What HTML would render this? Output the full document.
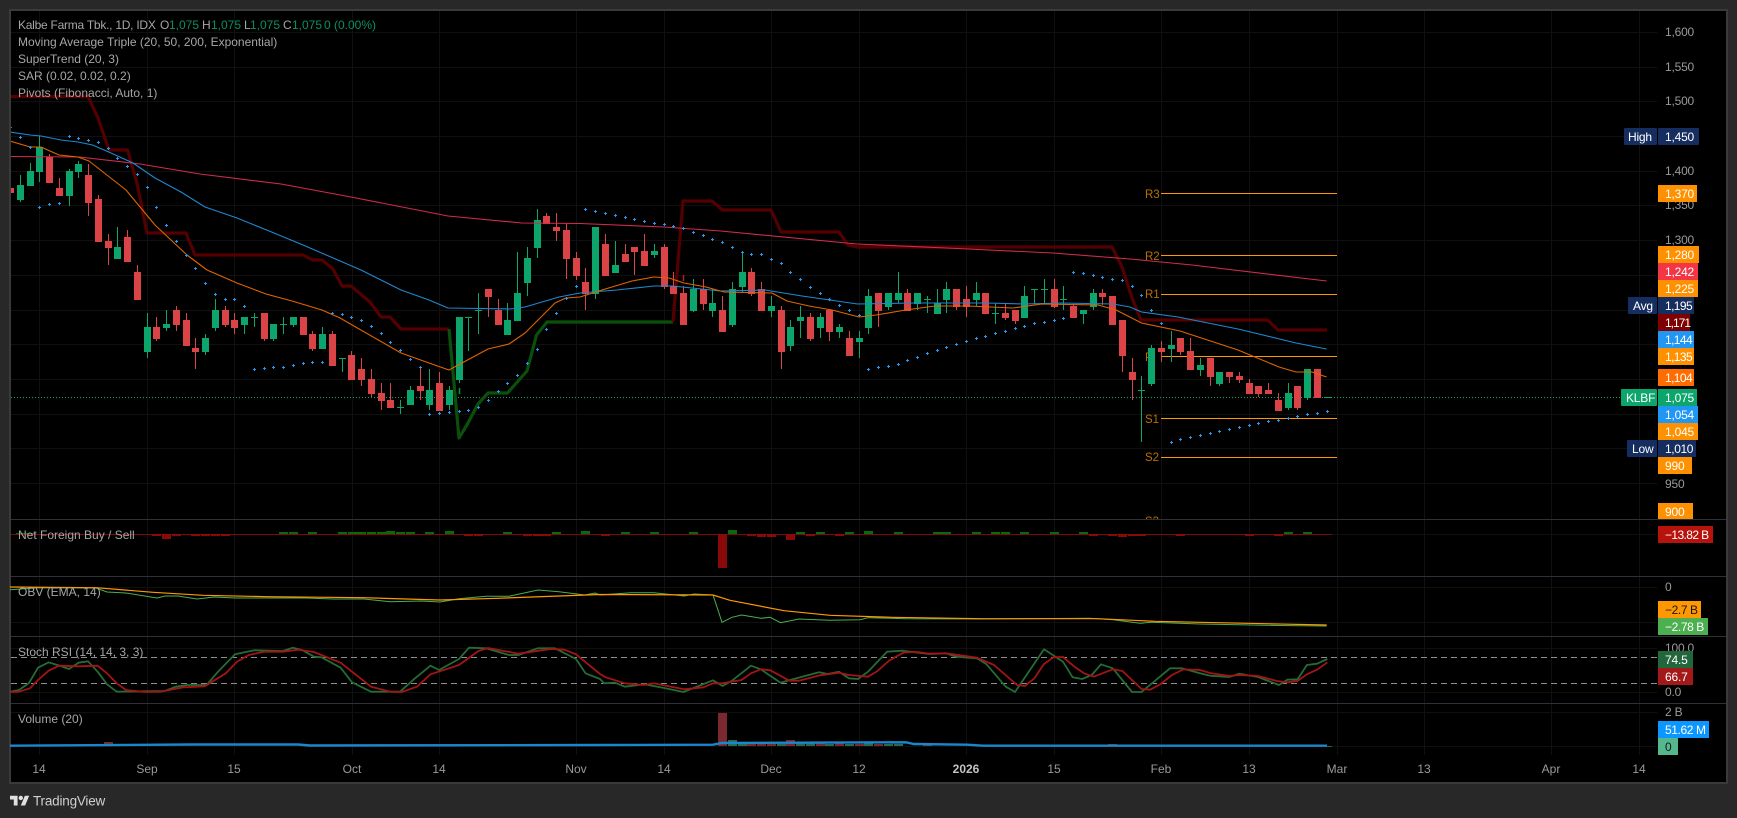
<!DOCTYPE html>
<html lang="en"><head><meta charset="utf-8"><title>KLBF Chart</title>
<style>
html,body{margin:0;padding:0;background:#282828;width:1737px;height:818px;overflow:hidden}
svg{display:block;font-family:"Liberation Sans",sans-serif}
.lg{font-size:12px;fill:#a6a6a6}
.ax{font-size:12px;fill:#9a9a9a;letter-spacing:-.2px}
.b{font-size:12px;fill:#fff;letter-spacing:-.2px}
.t{font-size:12px;fill:#9a9a9a;text-anchor:middle}
.p{font-size:11.5px;fill:#b86f05}
</style></head><body>
<svg width="1737" height="818" viewBox="0 0 1737 818" xmlns="http://www.w3.org/2000/svg">
<defs><clipPath id="cp"><rect x="11" y="11" width="1646" height="508"/></clipPath>
<clipPath id="ca"><rect x="1400" y="11" width="326" height="508"/></clipPath></defs>
<rect x="10" y="10" width="1717" height="773" fill="#000" stroke="#3a3a3a" stroke-width="2"/>

<!-- grid -->
<path fill="none" stroke="#101010" stroke-width="1" d="M11 32.5H1657M11 67.5H1657M11 101.5H1657M11 136.5H1657M11 171.5H1657M11 205.5H1657M11 240.5H1657M11 275.5H1657M11 310.5H1657M11 344.5H1657M11 379.5H1657M11 414.5H1657M11 448.5H1657M11 483.5H1657M11 534.5H1657M11 587.5H1657M11 622.5H1657M11 648.5H1657M11 692.5H1657M11 712.5H1657M11 746.5H1657
M39.5 11V755M147.5 11V755M234.5 11V755M352.5 11V755M439.5 11V755M576.5 11V755M664.5 11V755M771.5 11V755M859.5 11V755M966.5 11V755M1054.5 11V755M1161.5 11V755M1249.5 11V755M1337.5 11V755M1424.5 11V755M1551.5 11V755M1639.5 11V755"/>
<!-- pane separators -->
<path fill="none" stroke="#30303a" d="M11 519.5H1726M11 576.5H1726M11 636.5H1726M11 703.5H1726"/>

<g clip-path="url(#cp)">
<!-- price line -->
<path d="M11 397.5H1621" stroke="#0ca66d" stroke-dasharray="1 2" fill="none"/>
<!-- pivots -->
<path fill="none" stroke="#ff9800" d="M1161 193.5H1337M1161 255.5H1337M1161 294.5H1337M1161 356.5H1337M1161 418.5H1337M1161 457.5H1337"/>
<text class="p" x="1145" y="198">R3</text><text class="p" x="1145" y="260">R2</text><text class="p" x="1145" y="298">R1</text><text class="p" x="1145" y="361">P</text><text class="p" x="1145" y="423">S1</text><text class="p" x="1145" y="461">S2</text><text class="p" x="1145" y="525">S3</text>

<!-- supertrend -->
<g fill="none" stroke-width="3.2" stroke-linejoin="round">
<path stroke="#540000" d="M10 96.5L88 96.5L98 118L109 150L127.6 150L137 183L147 233L186 233L195 255L303 255L312.6 260L322 260L333 269L342 286L351 286L370 302L381 317L390 317L401 329L449 329"/>
<path stroke="#0a4f0a" d="M449 329L459 438L468 423L478 404L488 393L507.5 393L527 371L536.5 335L547 322L673 322"/>
<path stroke="#540000" d="M673 322L683 201L712 201L722.5 210L771 210L781 232L839 232L848 245L857.5 247L1112 247L1122 267L1132 298L1141 320L1267.5 320L1278 330L1327 330"/>
</g>

<!-- candles -->
<path fill="none" stroke="#0ca66d" d="M20.5 175V202M30.5 163V186M39.5 136V182M69.5 169V206M78.5 161V178M117.5 227V259M147.5 313V358M166.5 310V331M205.5 334V355M215.5 299V331M244.5 317V334M254.5 313V327M273.5 324V341M283.5 317V334M293.5 317V327M322.5 327V349M342.5 358V372M400.5 400V414M410.5 386V405M429.5 369V410M449.5 386V410M459.5 317V383M468.5 317V351M478.5 293V334M507.5 303V335M517.5 252V321M527.5 247V296M537.5 209V258M595.5 227V299M615.5 241V273M654.5 244V258M693.5 279V312M712.5 289V317M732.5 282V327M742.5 252V293M771.5 296V317M790.5 320V351M800.5 306V338M820.5 313V338M839.5 324V338M859.5 331V358M868.5 289V334M888.5 293V310M898.5 272V303M917.5 293V310M927.5 296V313M937.5 289V314M946.5 282V313M976.5 282V306M995.5 303V324M1024.5 286V318M1034.5 289V304M1044.5 279V304M1063.5 286V310M1083.5 310V324M1093.5 289V310M1141.5 376V442M1151.5 345V386M1171.5 331V362M1200.5 358V376M1219.5 372V386M1288.5 383V410M1307.5 369V400"/>
<path fill="none" stroke="#0ca66d" stroke-width="7" d="M20.5 185V200M30.5 171V186M39.5 147V172M69.5 171V196M78.5 164V172M117.5 247V259M147.5 327V352M166.5 324V328M205.5 338V352M215.5 310V328M244.5 317V325M254.5 317V318M273.5 324V339M283.5 324V325M293.5 317V325M322.5 334V349M342.5 358V359M400.5 407V408M410.5 390V405M429.5 390V405M449.5 390V405M459.5 317V380M468.5 317V318M478.5 310V311M507.5 320V335M517.5 293V321M527.5 258V283M537.5 220V248M595.5 227V294M615.5 265V273M654.5 251V255M693.5 289V311M712.5 303V311M732.5 289V325M742.5 272V287M771.5 306V311M790.5 327V346M800.5 317V321M820.5 317V328M839.5 327V332M859.5 338V342M868.5 296V328M888.5 293V307M898.5 293V300M917.5 293V304M927.5 299V300M937.5 303V314M946.5 289V300M976.5 293V300M995.5 313V314M1024.5 296V318M1034.5 289V290M1044.5 289V290M1063.5 299V300M1083.5 310V314M1093.5 293V307M1141.5 390V391M1151.5 348V384M1171.5 345V349M1200.5 365V370M1219.5 372V384M1288.5 393V408M1307.5 369V398M1327.5 397V398"/>
<path fill="none" stroke="#db4446" d="M10.5 183V206M49.5 154V183M59.5 178V196M88.5 164V216M98.5 195V242M108.5 234V265M127.5 230V262M137.5 265V300M156.5 317V341M176.5 306V331M186.5 313V346M195.5 338V369M225.5 306V327M234.5 313V334M264.5 313V341M303.5 317V335M312.5 331V351M332.5 331V366M351.5 351V380M361.5 358V386M371.5 369V397M381.5 383V410M390.5 383V408M420.5 367V400M439.5 372V411M488.5 289V317M498.5 299V325M546.5 213V224M556.5 213V241M566.5 223V279M576.5 252V280M585.5 268V310M605.5 234V276M625.5 244V262M634.5 247V275M644.5 234V266M664.5 244V289M673.5 272V294M683.5 286V325M703.5 279V310M722.5 296V332M751.5 268V296M761.5 282V311M781.5 306V369M810.5 313V341M829.5 309V341M849.5 331V356M878.5 293V327M907.5 289V311M956.5 289V310M966.5 286V317M985.5 293V314M1005.5 304V320M1015.5 310V324M1054.5 279V308M1073.5 304V318M1102.5 289V305M1112.5 296V325M1122.5 320V372M1132.5 358V400M1161.5 341V362M1180.5 338V355M1190.5 338V370M1210.5 358V386M1229.5 372V383M1239.5 372V383M1249.5 379V394M1258.5 386V397M1268.5 383V394M1278.5 393V411M1297.5 386V410M1317.5 369V398"/>
<path fill="none" stroke="#db4446" stroke-width="7" d="M10.5 188V193M49.5 157V183M59.5 188V196M88.5 175V203M98.5 199V242M108.5 241V248M127.5 237V262M137.5 272V300M156.5 327V339M176.5 310V325M186.5 320V346M195.5 348V352M225.5 310V325M234.5 320V328M264.5 313V339M303.5 317V335M312.5 334V349M332.5 334V366M351.5 355V380M361.5 369V380M371.5 379V394M381.5 393V401M390.5 400V408M420.5 386V391M439.5 383V411M488.5 289V297M498.5 310V325M546.5 216V224M556.5 227V231M566.5 230V259M576.5 258V276M585.5 282V294M605.5 244V276M625.5 254V262M634.5 247V252M644.5 251V266M664.5 247V287M673.5 286V294M683.5 293V325M703.5 289V304M722.5 310V332M751.5 272V294M761.5 289V311M781.5 310V352M810.5 317V339M829.5 310V332M849.5 338V356M878.5 293V311M907.5 293V311M956.5 289V307M966.5 299V307M985.5 293V314M1005.5 313V318M1015.5 310V321M1054.5 289V307M1073.5 306V318M1102.5 293V297M1112.5 296V325M1122.5 320V356M1132.5 372V380M1161.5 348V352M1180.5 338V352M1190.5 351V370M1210.5 358V377M1229.5 372V377M1239.5 376V380M1249.5 383V394M1258.5 386V394M1268.5 390V394M1278.5 400V411M1297.5 386V408M1317.5 369V398"/>
<path fill="none" stroke="#c51a1a" stroke-width="1.5" d="M683.5 275V281"/>
<path fill="none" stroke="#0b8f4a" stroke-width="1.5" d="M459.5 388V394"/>

<!-- EMAs -->
<g fill="none" stroke-width="1.1" stroke-linejoin="round">
<path stroke="#cf2c4b" d="M10 156.5L79.5 157L140 164L200 174L281 184L351 197L448 216L522 223L580 223.5L664 227L720.6 231L857 244L968 249L1053 253L1130 259L1192 265L1326.6 281"/>
<path stroke="#1e88d0" d="M10 132L30 135L41 136L61 140L78 142L92.5 145L111 153L133 163L155 178L181 192L205 207L237 218L274 233L303 245L361 270L401 290L429 300L448 308L510 309L525 307L559 297L580 293L617 290L654 286L672.5 286L720.6 291L765 290L802 296L857.5 304L913 303L987 303L1024 304L1061 303L1113 304L1130 307L1141.6 312L1178 317L1238 329L1296 343L1326.6 349"/>
<path stroke="#e06500" d="M10 141L30 147L41 147L59 155L78 157L89 161L126 190L155 225L187 255L207 270L237 283L266 294L292 301L322 310L340 318L401 353L429 363L449 370L488 349L509 344L525 333L555 303L566 298L580 297L602 290L632 281L654 277L669 278L684 283L706 287L724 292L772 293L787 301L809 306L832 310L859 317L876 315L905.6 310L935 306L968 306L1013 308L1042 304L1098 305L1116 310L1141.6 323L1180 331L1238 350L1279 367L1296 372L1312 372L1326.6 377"/>
</g>

<!-- SAR -->
<path transform="translate(0 .5)" fill="none" stroke="#2196f3" d="M9 127h3m-1.5-1.5v3M19 137h3m-1.5-1.5v3M29 147h3m-1.5-1.5v3M38 207h3m-1.5-1.5v3M48 204h3m-1.5-1.5v3M58 203h3m-1.5-1.5v3M68 136h3m-1.5-1.5v3M77 138h3m-1.5-1.5v3M87 140h3m-1.5-1.5v3M97 142h3m-1.5-1.5v3M107 148h3m-1.5-1.5v3M116 158h3m-1.5-1.5v3M126 166h3m-1.5-1.5v3M136 174h3m-1.5-1.5v3M146 187h3m-1.5-1.5v3M155 207h3m-1.5-1.5v3M165 225h3m-1.5-1.5v3M175 241h3m-1.5-1.5v3M185 255h3m-1.5-1.5v3M194 268h3m-1.5-1.5v3M204 283h3m-1.5-1.5v3M214 294h3m-1.5-1.5v3M224 299h3m-1.5-1.5v3M233 299h3m-1.5-1.5v3M243 306h3m-1.5-1.5v3M253 369h3m-1.5-1.5v3M263 368h3m-1.5-1.5v3M272 367h3m-1.5-1.5v3M282 367h3m-1.5-1.5v3M292 365h3m-1.5-1.5v3M302 363h3m-1.5-1.5v3M311 362h3m-1.5-1.5v3M321 362h3m-1.5-1.5v3M331 313h3m-1.5-1.5v3M341 314h3m-1.5-1.5v3M350 317h3m-1.5-1.5v3M360 320h3m-1.5-1.5v3M370 326h3m-1.5-1.5v3M380 333h3m-1.5-1.5v3M389 342h3m-1.5-1.5v3M399 350h3m-1.5-1.5v3M409 359h3m-1.5-1.5v3M419 367h3m-1.5-1.5v3M428 414h3m-1.5-1.5v3M438 413h3m-1.5-1.5v3M448 412h3m-1.5-1.5v3M458 411h3m-1.5-1.5v3M467 410h3m-1.5-1.5v3M477 407h3m-1.5-1.5v3M487 400h3m-1.5-1.5v3M497 391h3m-1.5-1.5v3M506 383h3m-1.5-1.5v3M516 375h3m-1.5-1.5v3M526 363h3m-1.5-1.5v3M536 349h3m-1.5-1.5v3M545 329h3m-1.5-1.5v3M555 313h3m-1.5-1.5v3M565 298h3m-1.5-1.5v3M575 286h3m-1.5-1.5v3M584 209h3m-1.5-1.5v3M594 211h3m-1.5-1.5v3M604 213h3m-1.5-1.5v3M614 215h3m-1.5-1.5v3M624 217h3m-1.5-1.5v3M633 219h3m-1.5-1.5v3M643 221h3m-1.5-1.5v3M653 223h3m-1.5-1.5v3M663 224h3m-1.5-1.5v3M672 226h3m-1.5-1.5v3M682 228h3m-1.5-1.5v3M692 232h3m-1.5-1.5v3M702 235h3m-1.5-1.5v3M711 239h3m-1.5-1.5v3M721 242h3m-1.5-1.5v3M731 247h3m-1.5-1.5v3M741 252h3m-1.5-1.5v3M750 254h3m-1.5-1.5v3M760 254h3m-1.5-1.5v3M770 259h3m-1.5-1.5v3M780 263h3m-1.5-1.5v3M789 272h3m-1.5-1.5v3M799 279h3m-1.5-1.5v3M809 287h3m-1.5-1.5v3M819 293h3m-1.5-1.5v3M828 299h3m-1.5-1.5v3M838 305h3m-1.5-1.5v3M848 310h3m-1.5-1.5v3M858 315h3m-1.5-1.5v3M867 369h3m-1.5-1.5v3M877 367h3m-1.5-1.5v3M887 366h3m-1.5-1.5v3M897 364h3m-1.5-1.5v3M906 360h3m-1.5-1.5v3M916 357h3m-1.5-1.5v3M926 353h3m-1.5-1.5v3M936 350h3m-1.5-1.5v3M945 347h3m-1.5-1.5v3M955 344h3m-1.5-1.5v3M965 341h3m-1.5-1.5v3M975 338h3m-1.5-1.5v3M984 336h3m-1.5-1.5v3M994 333h3m-1.5-1.5v3M1004 331h3m-1.5-1.5v3M1014 328h3m-1.5-1.5v3M1023 326h3m-1.5-1.5v3M1033 323h3m-1.5-1.5v3M1043 322h3m-1.5-1.5v3M1053 320h3m-1.5-1.5v3M1062 318h3m-1.5-1.5v3M1072 272h3m-1.5-1.5v3M1082 273h3m-1.5-1.5v3M1092 275h3m-1.5-1.5v3M1101 277h3m-1.5-1.5v3M1111 279h3m-1.5-1.5v3M1121 280h3m-1.5-1.5v3M1131 286h3m-1.5-1.5v3M1140 295h3m-1.5-1.5v3M1150 310h3m-1.5-1.5v3M1160 323h3m-1.5-1.5v3M1170 442h3m-1.5-1.5v3M1179 439h3m-1.5-1.5v3M1189 437h3m-1.5-1.5v3M1199 435h3m-1.5-1.5v3M1209 433h3m-1.5-1.5v3M1218 431h3m-1.5-1.5v3M1228 429h3m-1.5-1.5v3M1238 427h3m-1.5-1.5v3M1248 425h3m-1.5-1.5v3M1257 423h3m-1.5-1.5v3M1267 421h3m-1.5-1.5v3M1277 420h3m-1.5-1.5v3M1287 418h3m-1.5-1.5v3M1296 416h3m-1.5-1.5v3M1306 414h3m-1.5-1.5v3M1316 413h3m-1.5-1.5v3M1326 411h3m-1.5-1.5v3"/>
</g>

<!-- Net foreign -->
<path fill="none" stroke="#7d0b0b" d="M11 534.5H1332"/>
<path fill="none" stroke="#8a0a0a" stroke-width="9" d="M156.5 534v2M166.5 534v5M176.5 534v2M195.5 534v2M205.5 534v2M215.5 534v2M225.5 534v2M468.5 534v2M478.5 534v2M527.5 534v2M537.5 534v2M546.5 534v2M605.5 534v2M722.5 534v34M751.5 534v2M761.5 534v3M771.5 534v3M790.5 534v6M810.5 534v2M839.5 534v2M1093.5 534v2M1112.5 534v2M1122.5 534v3M1132.5 534v2M1141.5 534v2M1180.5 534v2M1249.5 534v2M1278.5 534v2"/>
<path fill="none" stroke="#0a6a0a" stroke-width="9" d="M283.5 534v-2M293.5 534v-2M312.5 534v-2M342.5 534v-2M352.5 534v-2M361.5 534v-2M371.5 534v-2M381.5 534v-2M390.5 534v-3M400.5 534v-2M410.5 534v-2M429.5 534v-2M449.5 534v-3M507.5 534v-2M556.5 534v-2M585.5 534v-3M625.5 534v-2M654.5 534v-2M693.5 534v-2M732.5 534v-4M800.5 534v-2M820.5 534v-2M849.5 534v-2M868.5 534v-3M898.5 534v-2M937.5 534v-2M946.5 534v-2M976.5 534v-2M995.5 534v-2M1005.5 534v-2M1024.5 534v-2M1054.5 534v-2M1083.5 534v-2M1288.5 534v-2M1307.5 534v-2M20.5 534v-1M30.5 534v-1"/>

<!-- OBV -->
<path fill="none" stroke="#4caf50" stroke-width="1" d="M10 589.7L38 587.7L96 588L107 592L126 593L157 598L165 596L178 596L197 599L214 597L235 598L268 598L306 598L333 599L364 599L390 601.7L421 601L440 602L459 598.7L486 596.3L509 596.3L538 590L559 591.7L585 595L595 593L600 595L631 592.7L654 592.7L684 596L694 594L713 595L722 622.3L732 617.3L741.6 615L761 618.3L770 617.3L780.6 622.7L799 619L829.6 620.3L860 619.7L868 617.7L906 618.7L983 619L1090 618.3L1113 619.7L1140 623.3L1151 622.3L1200 624L1280 625.5L1326.7 626"/>
<path fill="none" stroke="#ff9800" stroke-width="1.2" d="M10 587L96 587.7L153 592.3L203 595.3L268 596.7L364 597.7L440 600L497.5 598.3L600 594.5L713 595L730 600.3L784 610.7L830 615.3L891 617.3L983 618.7L1097.5 618.7L1155 621.3L1200 622.3L1326.7 625"/>

<!-- Stoch RSI -->
<path fill="none" stroke="#8e8e8e" stroke-dasharray="6 4" d="M11 657.5H1657M11 683.5H1657"/>
<path fill="none" stroke="#256b35" stroke-width="1.8" stroke-linejoin="round" d="M10 691.7L19 690L29 683L38 667.7L48.6 662.3L57.4 665L69 669L78.5 662.7L88 661.3L97.6 671.7L107 684.3L116.7 691.7L164.6 691L176 686.7L187.5 685L206.7 685L218 671.7L235 654.3L254.5 650.3L283 651L292.8 647.7L302 650L314 656.7L321.5 657.3L340.6 667.7L352 682.3L371 691.7L400 691.7L415 678.3L430.5 665.7L439 670L459 659L469 647.7L486 648.3L509 655L518.6 655L537.7 648.3L555 648.3L576 659L585.5 673.3L600 679L604 683.3L615 682.7L625 686.7L644 684.3L663 687.7L683.4 692L713 680.3L722.5 686L732 680.7L751 665.7L760.7 669.3L780.6 682.7L790 680L819 672.3L827.7 674L839 671.7L848.8 678.3L858 679L868 671.7L887 651.7L902.3 650.7L929 654L946 653.3L956 656.7L977 658.3L986.5 664.3L1005.7 686.7L1015 692L1044 649.3L1063 661.7L1072.6 677.3L1082 679L1091.8 675L1101 664.3L1112.8 668.3L1132 692L1141.5 692L1170 668.3L1181.7 668.3L1200 673.3L1210 675.7L1229 677L1239.4 673.7L1258 677L1279 685L1287.3 679.7L1297.6 679.3L1306.9 665L1317 663.7L1327.4 659"/>
<path fill="none" stroke="#a31515" stroke-width="1.8" stroke-linejoin="round" d="M10 692L19 691.7L30 688.3L38 680L48.6 670.7L59 665.7L78.5 666.3L97.6 665.7L107 673.3L116.7 683.3L126 690L145.4 692L160.7 691.7L183.7 687.3L204.7 686.3L225.8 673.3L237 661.7L248.8 655L264 651.7L283 651.7L298.5 649.7L313.8 652L340.6 662.7L371 686.7L390.4 691.7L401.8 692L417 686.7L430.5 674.3L459 665L478.4 651L488 648L518.6 653.7L551 649L564.5 649.7L576 654.3L600 674L605.7 677.3L625 683.3L644 685L653.6 683.3L684 689.3L703.3 687.3L713 683.3L722.5 683.3L741.6 680L751 673.3L760.7 669.3L770.3 670.3L789.4 680.7L799 680.7L820 675.3L839 672.7L848.8 675L868 676.7L877.5 671L889 660.7L904 652.3L917.6 652L929 653.7L946 653.3L977 657.7L994 665L1017 685L1024.8 686L1034.4 678.3L1044 664L1053.5 657.3L1063 657L1074.5 666.7L1084 673.3L1093.7 676.7L1112.8 669.3L1122.4 671L1141.5 689L1150.3 689.7L1160.7 684L1172 675L1183.6 669.3L1200 670L1210 673L1229 676L1239.4 675L1258 676L1277 681L1287.3 682.3L1297.6 681L1306.9 674.3L1317 669.7L1327.4 662.3"/>

<!-- Volume -->
<path fill="none" stroke="#7a2a2e" stroke-width="9" d="M108.5 746v-4M722.5 746v-33M751.5 746v-3M761.5 746v-2M771.5 746v-2M790.5 746v-6M820.5 746v-3M839.5 746v-3M859.5 746v-2M878.5 746v-2M927.5 746v-2M1112.5 746v-2"/>
<path fill="none" stroke="#2b6a50" stroke-width="9" d="M732.5 746v-6M742.5 746v-3M781.5 746v-2M800.5 746v-3M810.5 746v-3M829.5 746v-2M849.5 746v-2M868.5 746v-3M888.5 746v-2M898.5 746v-2"/>
<path fill="none" stroke="#1a86cc" stroke-width="2.4" d="M10 745.7L191 744.5L298 744.5L310 745.5L600 745L713 744.7L722 743L906 742.3L914 744L967 744.7L983 745.7L1327 745.7"/>
<path fill="none" stroke="#1f6b4a" d="M1327 746.5H1332"/>

<!-- legend -->
<text class="lg" x="18" y="29" style="letter-spacing:-.25px">Kalbe Farma Tbk., 1D, IDX</text>
<text class="lg" x="160" y="29">O</text><text class="lg" x="169" y="29" style="fill:#0b8f60">1,075</text>
<text class="lg" x="202" y="29">H</text><text class="lg" x="211" y="29" style="fill:#0b8f60">1,075</text>
<text class="lg" x="244" y="29">L</text><text class="lg" x="250" y="29" style="fill:#0b8f60">1,075</text>
<text class="lg" x="283" y="29">C</text><text class="lg" x="292" y="29" style="fill:#0b8f60">1,075</text>
<text class="lg" x="324" y="29" style="fill:#0b8f60">0 (0.00%)</text>
<text class="lg" x="18" y="46">Moving Average Triple (20, 50, 200, Exponential)</text>
<text class="lg" x="18" y="63">SuperTrend (20, 3)</text>
<text class="lg" x="18" y="80">SAR (0.02, 0.02, 0.2)</text>
<text class="lg" x="18" y="97">Pivots (Fibonacci, Auto, 1)</text>
<text class="lg" x="18" y="539">Net Foreign Buy / Sell</text>
<text class="lg" x="18" y="596">OBV (EMA, 14)</text>
<text class="lg" x="18" y="656">Stoch RSI (14, 14, 3, 3)</text>
<text class="lg" x="18" y="723">Volume (20)</text>

<!-- axis plain -->
<text class="ax" x="1665" y="36">1,600</text><text class="ax" x="1665" y="71">1,550</text><text class="ax" x="1665" y="105">1,500</text><text class="ax" x="1665" y="175">1,400</text><text class="ax" x="1665" y="209">1,350</text><text class="ax" x="1665" y="244">1,300</text><text class="ax" x="1665" y="488">950</text>
<text class="ax" x="1665" y="591">0</text><text class="ax" x="1665" y="652">100.0</text><text class="ax" x="1665" y="696">0.0</text><text class="ax" x="1665" y="716">2 B</text>

<!-- badges -->
<g clip-path="url(#ca)">
<rect x="1624" y="128" width="33" height="17" rx="1" fill="#162d5f"/><text class="b" x="1628" y="141">High</text>
<rect x="1658" y="128" width="41" height="17" rx="1" fill="#162d5f"/><text class="b" x="1665" y="141">1,450</text>
<rect x="1658" y="185" width="39" height="17" fill="#ff9100"/><text class="b" x="1665" y="198">1,370</text>
<rect x="1658" y="246" width="41" height="17" fill="#ff9100"/><text class="b" x="1665" y="259">1,280</text>
<rect x="1658" y="263" width="40" height="17" fill="#f23645"/><text class="b" x="1665" y="276">1,242</text>
<rect x="1658" y="280" width="40" height="17" fill="#ff9100"/><text class="b" x="1665" y="293">1,225</text>
<rect x="1628" y="297" width="29" height="17" rx="1" fill="#162d5f"/><text class="b" x="1633" y="310">Avg</text>
<rect x="1658" y="297" width="36" height="17" fill="#162d5f"/><text class="b" x="1665" y="310" style="letter-spacing:-.6px">1,195</text>
<rect x="1658" y="314" width="32" height="17" fill="#7f0000"/><text class="b" x="1665" y="327" style="letter-spacing:-1px">1,171</text>
<rect x="1658" y="331" width="36" height="17" fill="#2196f3"/><text class="b" x="1665" y="344" style="letter-spacing:-.6px">1,144</text>
<rect x="1658" y="348" width="36" height="17" fill="#ff9100"/><text class="b" x="1665" y="361" style="letter-spacing:-.6px">1,135</text>
<rect x="1658" y="369" width="36" height="17" fill="#ff6d00"/><text class="b" x="1665" y="382" style="letter-spacing:-.6px">1,104</text>
<rect x="1621" y="389" width="36" height="17" rx="1" fill="#0ca66d"/><text class="b" x="1626" y="402">KLBF</text>
<rect x="1658" y="389" width="39" height="17" fill="#0ca66d"/><text class="b" x="1665" y="402">1,075</text>
<rect x="1658" y="406" width="40" height="17" fill="#2196f3"/><text class="b" x="1665" y="419">1,054</text>
<rect x="1658" y="423" width="40" height="17" fill="#ff9100"/><text class="b" x="1665" y="436">1,045</text>
<rect x="1627" y="440" width="30" height="17" rx="1" fill="#162d5f"/><text class="b" x="1632" y="453">Low</text>
<rect x="1658" y="440" width="38" height="17" fill="#162d5f"/><text class="b" x="1665" y="453" style="letter-spacing:-.4px">1,010</text>
<rect x="1658" y="457" width="34" height="17" fill="#ff9100"/><text class="b" x="1665" y="470">990</text>
<rect x="1658" y="503" width="35" height="17" fill="#ff9100"/><text class="b" x="1665" y="516">900</text>
</g>
<rect x="1658" y="526" width="55" height="17" fill="#b8120c"/><text class="b" x="1665" y="539" style="letter-spacing:-.6px">−13.82 B</text>
<rect x="1658" y="601" width="43" height="17" fill="#ff9800"/><text class="b" x="1665" y="614" style="fill:#131722;letter-spacing:-.4px">−2.7 B</text>
<rect x="1658" y="618" width="50" height="17" fill="#4caf50"/><text class="b" x="1665" y="631" style="letter-spacing:-.4px">−2.78 B</text>
<rect x="1658" y="651" width="35" height="17" fill="#22663c"/><text class="b" x="1665" y="664">74.5</text>
<rect x="1658" y="668" width="35" height="17" fill="#a31818"/><text class="b" x="1665" y="681">66.7</text>
<rect x="1658" y="721" width="51" height="17" fill="#0b97ff"/><text class="b" x="1665" y="734" style="letter-spacing:-.4px">51.62 M</text>
<rect x="1658" y="738" width="20" height="17" fill="#55b88c"/><text class="b" x="1665" y="751" style="fill:#131722">0</text>

<!-- time axis -->
<text class="t" x="39" y="773">14</text><text class="t" x="147" y="773">Sep</text><text class="t" x="234" y="773">15</text><text class="t" x="352" y="773">Oct</text><text class="t" x="439" y="773">14</text><text class="t" x="576" y="773">Nov</text><text class="t" x="664" y="773">14</text><text class="t" x="771" y="773">Dec</text><text class="t" x="859" y="773">12</text><text class="t" x="966" y="773" style="font-weight:bold;fill:#c4c4c4">2026</text><text class="t" x="1054" y="773">15</text><text class="t" x="1161" y="773">Feb</text><text class="t" x="1249" y="773">13</text><text class="t" x="1337" y="773">Mar</text><text class="t" x="1424" y="773">13</text><text class="t" x="1551" y="773">Apr</text><text class="t" x="1639" y="773">14</text>

<!-- logo -->
<g fill="#e0e0e0" transform="translate(10,793.6) scale(.54)"><path d="M14 22H7V11H0V4h14v18zM28 22h-8l7.5-18h8L28 22z"/><circle cx="20" cy="8" r="4"/></g>
<text x="33" y="805.5" style="font-size:13.5px;fill:#d0d0d0;letter-spacing:-.2px">TradingView</text>
</svg>
</body></html>
